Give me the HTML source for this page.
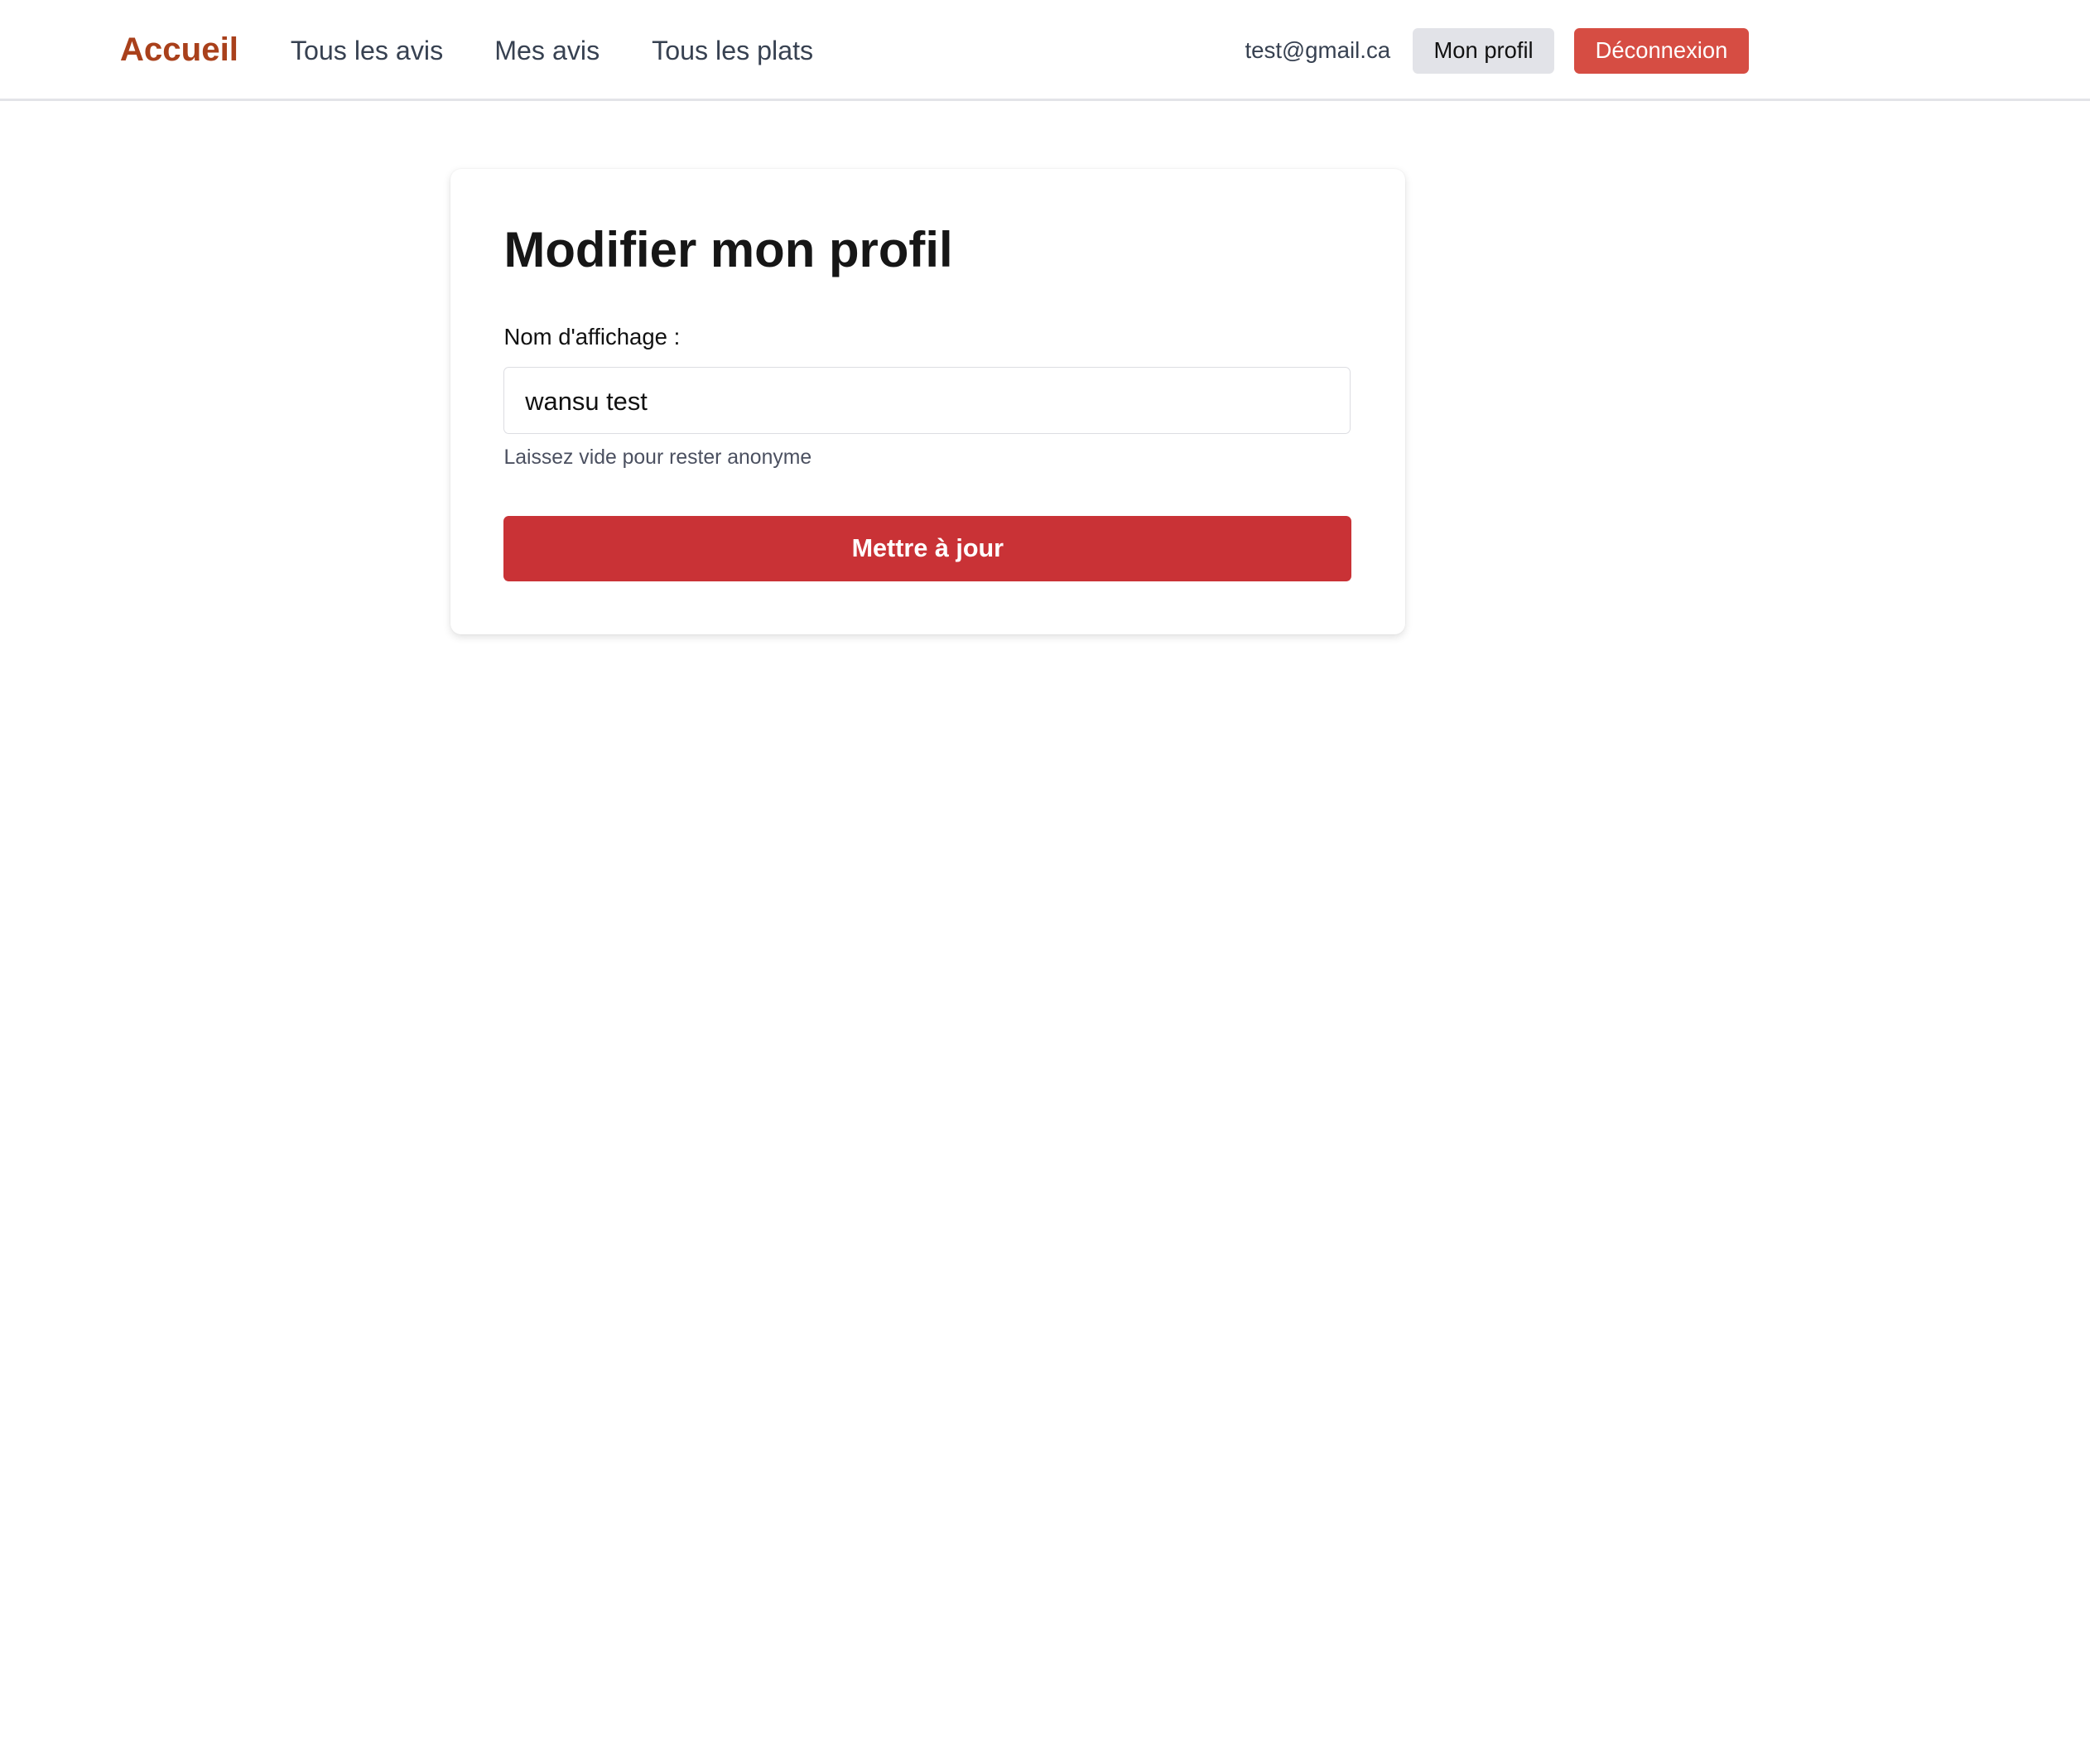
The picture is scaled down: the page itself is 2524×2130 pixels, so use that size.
<!DOCTYPE html>
<html><head><meta charset="utf-8"><style>
html,body{margin:0;padding:0;background:#fff;}
body{width:1568px;height:1323px;zoom:1.60969;position:relative;overflow:hidden;font-family:"Liberation Sans",Arial,sans-serif;}
.a{position:absolute;white-space:nowrap;line-height:1;}
nav{position:absolute;left:0;top:0;width:1568px;height:74px;border-bottom:2px solid #e3e4e8;background:#fff;}
.lnk{font-size:20px;color:#374151;top:28px;}
.btn{position:absolute;border-radius:4px;font-size:17px;text-align:center;line-height:34px;height:34px;top:20px;}
.card{position:absolute;left:338px;top:127px;width:716px;height:349px;background:#fff;border-radius:8px;box-shadow:0 2px 6px rgba(0,0,0,.12),0 0 1px rgba(0,0,0,.08);}
</style></head><body>
<nav>
<div class="a" style="left:90px;top:25px;font-size:25px;font-weight:bold;color:#a9401b;">Accueil</div>
<div class="a lnk" style="left:218px;">Tous les avis</div>
<div class="a lnk" style="left:371px;">Mes avis</div>
<div class="a lnk" style="left:489px;">Tous les plats</div>
<div class="a" style="left:934px;top:29px;font-size:17.2px;color:#374151;">test@gmail.ca</div>
<div class="btn" style="left:1060px;width:106px;background:#e2e3e8;color:#111;top:21px;">Mon profil</div>
<div class="btn" style="left:1181px;width:131px;background:#d64d43;color:#fff;top:21px;">Déconnexion</div>
</nav>
<div class="card"></div>
<div class="a" style="left:378px;top:169px;font-size:37.2px;font-weight:bold;color:#161616;">Modifier mon profil</div>
<div class="a" style="left:378px;top:244px;font-size:17.1px;color:#111;">Nom d'affichage :</div>
<div style="position:absolute;left:378px;top:275px;width:634px;height:49px;border:1px solid #dcdde2;border-radius:4px;"></div>
<div class="a" style="left:394px;top:292px;font-size:19.2px;color:#111;">wansu test</div>
<div class="a" style="left:378px;top:336px;font-size:15.4px;color:#4b5060;">Laissez vide pour rester anonyme</div>
<div style="position:absolute;left:378px;top:387px;width:636px;height:49px;background:#c93236;border-radius:4px;color:#fff;font-weight:bold;font-size:19px;text-align:center;line-height:49px;">Mettre à jour</div>
</body></html>
